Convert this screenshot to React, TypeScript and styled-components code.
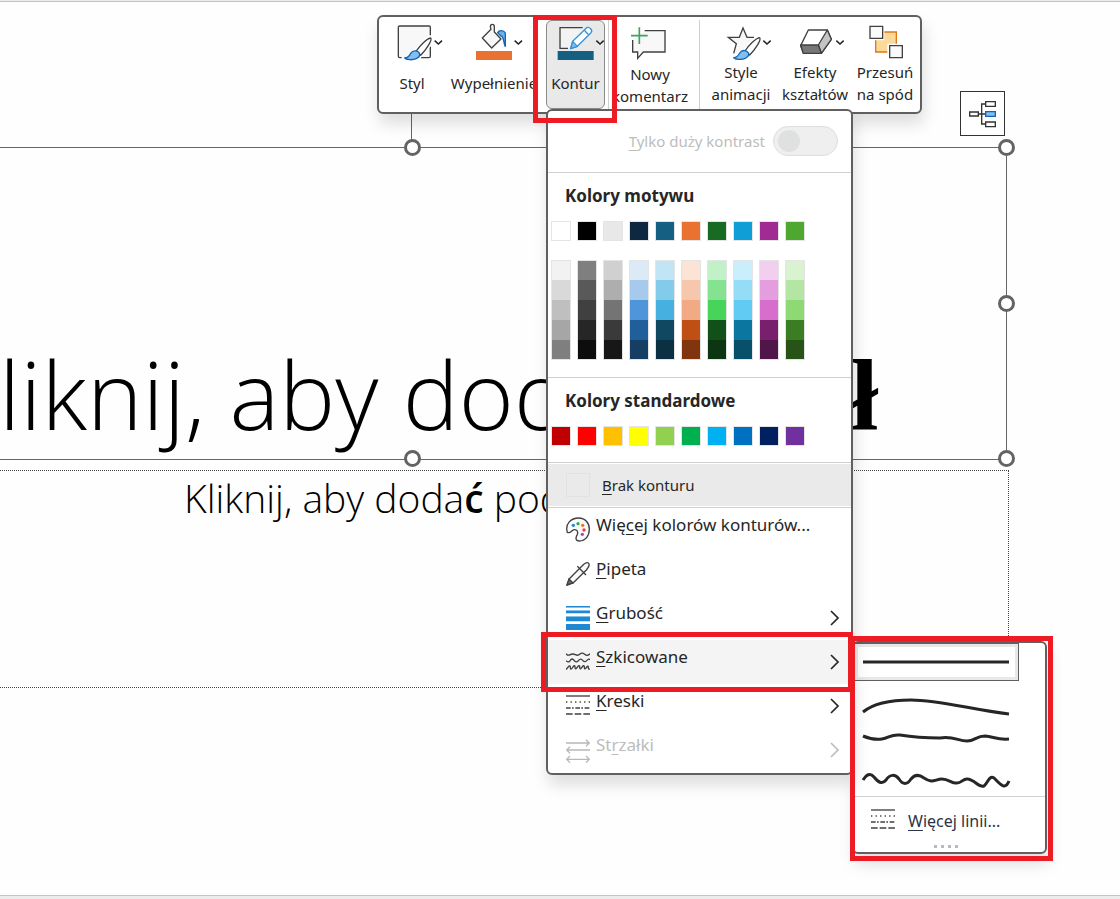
import React from "react";
import styled, { createGlobalStyle, css } from "styled-components";

const UI_FONT = '"Noto Sans", "Open Sans", sans-serif';
const INK = "#262626";
const FRAME = "#606060";
const RULE = "#d0d0d0";
const RED = "#ed1c24";

const GlobalStyle = createGlobalStyle`
  *, *::before, *::after { box-sizing: border-box; }
  body { margin: 0; background: #fdfdfd; color: ${INK}; font-family: ${UI_FONT}; }
  button { font: inherit; color: inherit; }
`;

/* ---------- slide canvas ---------- */

const Page = styled.main`
  min-height: 100vh;
  display: flex;
  flex-direction: column;
  border-top: 1px solid #ececec;
  overflow: hidden;
`;

const Canvas = styled.section`
  position: relative;
  flex: 1;
  min-height: 880px;
  padding-top: 145px;
  border-top: 1px solid #c4c4c4;
  border-bottom: 1px solid #c4c4c4;
  background: #fefefe;
`;

const BottomStrip = styled.div`
  height: 3px;
  background: #ececec;
`;

const TitleBox = styled.div`
  position: relative;
  width: 1191px;
  height: 313px;
  margin-left: -184px;
  padding-bottom: 12px;
  border: 1px solid #666;
  display: flex;
  align-items: flex-end;
  justify-content: center;
`;

const Title = styled.h1`
  margin: 0;
  font: 300 94px/104px "Open Sans", "Noto Sans", sans-serif;
  color: #000;
  white-space: nowrap;
`;

const SerifGlyph = styled.span`
  font-family: "Liberation Serif", serif;
  font-weight: 700;
  font-size: 102px;
  line-height: 1;
`;

const SubtitleBox = styled.div`
  width: 1195px;
  height: 218px;
  margin: 10px 0 0 -186px;
  border: 1px dotted #444;
  text-align: center;
`;

const Subtitle = styled.p`
  margin: 0;
  font: 300 39px/54px "Open Sans", "Noto Sans", sans-serif;
  color: #000;
`;

const AccentGlyph = styled.span`
  font-weight: 600;
`;

const Handle = styled.span<{ $x: string; $y: string }>`
  position: absolute;
  left: ${(p) => p.$x};
  top: ${(p) => p.$y};
  width: 17px;
  height: 17px;
  margin: -9px 0 0 -8px;
  border: 3px solid #636363;
  border-radius: 50%;
  background: #fff;
`;

const RotateStem = styled.span`
  position: absolute;
  left: 594px;
  bottom: 100%;
  width: 1px;
  height: 40px;
  background: #666;
`;

const DesignerButton = styled.button`
  position: absolute;
  left: 960px;
  top: 89px;
  width: 45px;
  height: 45px;
  padding: 0;
  border: 1px solid #333;
  background: #fff;
  display: flex;
  align-items: center;
  justify-content: center;
`;

/* ---------- floating toolbar ---------- */

const floating = css`
  position: absolute;
  border: 2px solid ${FRAME};
  border-radius: 6px;
  background: #fff;
  box-shadow: 2px 10px 16px rgba(0, 0, 0, 0.13);
`;

const Toolbar = styled.div`
  ${floating}
  left: 377px;
  top: 13px;
  width: 545px;
  padding: 3px 0;
  display: flex;
`;

const Tool = styled.button<{ $width: number; $gap?: number; $active?: boolean; $left?: number }>`
  flex: none;
  width: ${(p) => p.$width}px;
  height: 89px;
  margin: 0 0 0 ${(p) => p.$left ?? 0}px;
  padding: 1px 0 0;
  border: 1px solid ${(p) => (p.$active ? "#8a8a8a" : "transparent")};
  border-radius: 6px;
  background: ${(p) => (p.$active ? "#e9e9e9" : "transparent")};
  display: flex;
  flex-direction: column;
  align-items: center;
  gap: ${(p) => p.$gap ?? 0}px;
  font-size: 15px;
  line-height: 22px;
  svg { flex: none; }
`;

const ToolLabel = styled.span`
  white-space: pre;
  text-align: center;
`;

const Separator = styled.span<{ $left: number }>`
  width: 1px;
  margin-left: ${(p) => p.$left}px;
  background: #cfcfcf;
`;

/* ---------- outline menu ---------- */

const Menu = styled.div`
  ${floating}
  left: 546px;
  top: 107px;
  width: 307px;
`;

const ContrastRow = styled.label`
  height: 62px;
  padding: 0 13px 2px 0;
  border-bottom: 1px solid ${RULE};
  display: flex;
  align-items: center;
  justify-content: flex-end;
  gap: 8px;
  color: #bdbdbd;
  font-size: 15px;
`;

const Toggle = styled.input`
  appearance: none;
  width: 65px;
  height: 30px;
  margin: 0;
  padding: 3px 4px;
  border: 1px solid #dedede;
  border-radius: 15px;
  background: #efefef;
  &::before {
    content: "";
    display: block;
    width: 22px;
    height: 22px;
    border-radius: 50%;
    background: #dfe1e0;
  }
`;

const ColorSection = styled.section<{ $bottom: number }>`
  padding: 10px 3px ${(p) => p.$bottom}px;
  border-bottom: 1px solid ${RULE};
`;

const SectionTitle = styled.h2`
  margin: 0 0 12px 14px;
  font-size: 17px;
  line-height: 26px;
  font-weight: 700;
`;

const SwatchRow = styled.div`
  display: flex;
  gap: 6px;
`;

const Swatch = styled.button<{ $color: string }>`
  width: 20px;
  height: 20px;
  padding: 0;
  border: 1px solid #e4e4e4;
  background: ${(p) => p.$color};
`;

const ShadeGrid = styled.div`
  display: flex;
  gap: 6px;
  margin-top: 19px;
`;

const ShadeColumn = styled.div`
  width: 20px;
  border: 1px solid #e4e4e4;
  display: flex;
  flex-direction: column;
`;

const Shade = styled.button<{ $color: string }>`
  height: 20px;
  padding: 0;
  border: 0;
  background: ${(p) => p.$color};
  &:first-child, &:last-child { height: 19px; }
`;

const NoOutline = styled.button`
  width: 100%;
  height: 44px;
  padding: 0 0 0 18px;
  border: 1px solid #fff;
  border-width: 1px 0;
  background: #eaeaea;
  display: flex;
  align-items: center;
  gap: 12px;
  font-size: 15px;
`;

const EmptySwatch = styled.span`
  width: 24px;
  height: 24px;
  border: 1px solid #e2e2e2;
`;

const Items = styled.div`
  padding-bottom: 1px;
  border-top: 1px solid ${RULE};
`;

const Item = styled.button<{ $hover?: boolean }>`
  width: 100%;
  height: 44px;
  padding: 0 11px 0 18px;
  border: 0;
  background: ${(p) => (p.$hover ? "#f4f4f4" : "transparent")};
  display: flex;
  align-items: center;
  gap: 6px;
  font-size: 17px;
  line-height: 24px;
  text-align: left;
  &:disabled { color: #bdbdbd; }
`;

const ItemLabel = styled.span`
  flex: 1;
  padding-bottom: 10px;
`;

const Key = styled.span`
  text-decoration: underline;
  text-decoration-thickness: 1px;
  text-underline-offset: 3px;
`;

/* ---------- sketched submenu ---------- */

const SubMenu = styled.div`
  ${floating}
  left: 852px;
  top: 639px;
  width: 195px;
`;

const Sketches = styled.div`
  padding-bottom: 1px;
`;

const SketchChoice = styled.button<{ $selected?: boolean }>`
  display: block;
  width: 165px;
  height: 38px;
  padding: 0;
  border: 1px solid ${(p) => (p.$selected ? FRAME : "transparent")};
  box-shadow: ${(p) => (p.$selected ? "inset 0 0 0 3px #e8e8e8" : "none")};
  background: transparent;
  svg { display: block; margin: -1px; }
`;

const MoreLines = styled.button`
  width: 100%;
  height: 46px;
  padding: 0 0 0 17px;
  border: 0;
  border-top: 1px solid ${RULE};
  background: transparent;
  display: flex;
  align-items: center;
  gap: 13px;
  font-size: 16px;
  color: #2b3348;
`;

const MoreLabel = styled.span`
  padding-top: 3px;
`;

const Grip = styled.div`
  height: 10px;
  padding: 3px 8px 0 0;
  display: flex;
  justify-content: center;
  gap: 4px;
`;

const GripDot = styled.span`
  width: 3px;
  height: 3px;
  background: #b4bac8;
`;

const Marker = styled.div<{ $x: number; $y: number; $w: number; $h: number }>`
  position: absolute;
  left: ${(p) => p.$x}px;
  top: ${(p) => p.$y}px;
  width: ${(p) => p.$w}px;
  height: ${(p) => p.$h}px;
  border: 5px solid ${RED};
  pointer-events: none;
`;

/* ---------- icons ---------- */

const ToolIcon = ({ x, children }: { x: number; children: React.ReactNode }) => (
  <svg width="64" height="39" viewBox={`${x} 66 192 117`} fill="none" stroke="#404040" strokeWidth="4" aria-hidden="true">
    {children}
  </svg>
);

const Chevron = ({ x }: { x: number }) => (
  <path d={`M${x - 11} 122L${x} 132L${x + 11} 122`} stroke="#222" strokeWidth="4.5" />
);

const Brush = ({ x, y }: { x: number; y: number }) => (
  <g transform={`translate(${x} ${y})`} strokeLinejoin="round">
    <path d="M36 40C48 22 68 2 80 0C86 6 66 36 50 52Z" fill="#fff" stroke="#fff" strokeWidth="12" />
    <path d="M36 40C48 22 68 2 80 0C86 6 66 36 50 52Z" fill="#fff" />
    <path d="M2 60C12 60 16 54 20 46C28 34 44 38 47 48C48 62 28 66 18 65C10 65 4 62 2 60Z" fill="#83beec" stroke="#0f66b8" />
  </g>
);

const StyleIcon = () => (
  <ToolIcon x={30}>
    <path d="M181 106V82Q181 78 177 78H89Q85 78 85 82V169Q85 173 89 173H181V82" fill="#f8f8f8" stroke="none" />
    <path d="M181 106V82Q181 78 177 78H89Q85 78 85 82V169Q85 173 89 173H95M153 173H177Q181 173 181 169V140" />
    <Brush x={102} y={114} />
    <Chevron x={205} />
  </ToolIcon>
);

const FillIcon = () => (
  <ToolIcon x={279}>
    <path d="M340 114L366 88L364 80Q364 73 370 73Q376 73 376 80V96L396 117L368 144Z" fill="#f8f8f8" strokeLinejoin="round" />
    <path d="M386 98C390 90 404 90 409 99V140C403 128 405 108 396 108Z" fill="#6fb2e8" stroke="#0f66b8" />
    <path d="M321 153H429V180H321Z" fill="#e97132" stroke="none" />
    <Chevron x={448} />
  </ToolIcon>
);

const OutlineIcon = () => (
  <ToolIcon x={520}>
    <path d="M568 83H640L605 145H568Z" fill="#f3f3f3" stroke="none" />
    <path d="M636 83H568V145H592" />
    <path d="M600 146L606 124L648 83Q654 80 660 86Q666 92 661 98L620 139Z" fill="#fff" stroke="#2f94dc" strokeLinejoin="round" />
    <path d="M600 146L606 124L620 139Z" fill="#83beec" stroke="#2f94dc" strokeLinejoin="round" />
    <path d="M641 91L654 104" stroke="#2f94dc" />
    <path d="M561 153H669V180H561Z" fill="#156082" stroke="none" />
    <Chevron x={688} />
  </ToolIcon>
);

const CommentIcon = () => (
  <ToolIcon x={54}>
    <path d="M134 92H195V156H130L113 175V156H98V120" fill="#f8f8f8" />
    <path d="M118 82V132M93 107H143" stroke="#3aa657" strokeWidth="5" />
  </ToolIcon>
);

const AnimationIcon = () => (
  <ToolIcon x={327}>
    <path d="M403 161L409 131L385 112H418L429 84L441 112H472L440 145Z" fill="#f8f8f8" stroke="none" />
    <path d="M401 160L409 131L385 112H418L429 84L441 112H462" />
    <Brush x={399} y={113} />
    <Chevron x={501} />
  </ToolIcon>
);

const EffectsIcon = () => (
  <ToolIcon x={549}>
    <path d="M625 90H682L694 118L664 160H610L602 137Z" fill="#fff" strokeLinejoin="round" />
    <path d="M682 90L694 118L664 160L655 135Z" fill="#c4c4c4" strokeLinejoin="round" />
    <path d="M602 135H655L664 160H610Z" fill="#777" strokeLinejoin="round" />
    <Chevron x={720} />
  </ToolIcon>
);

const SendBackIcon = () => (
  <ToolIcon x={759}>
    <path d="M827 96H889V156H827Z" fill="#fbd998" stroke="#dd7a14" />
    <path d="M805 73H853V121H805ZM862 131H912V179H862Z" fill="#fff" stroke="none" />
    <path d="M810 79H848V115H810ZM869 137H907V173H869Z" fill="#fafafa" />
  </ToolIcon>
);

const HierarchyIcon = () => (
  <svg width="27" height="28" viewBox="0 0 81 84" fill="#fff" stroke="#333" strokeWidth="4" aria-hidden="true">
    <path d="M28 42H48M48 12H38V72H48" fill="none" />
    <path d="M2 36H28V48H2ZM50 5H79V19H50ZM50 66H79V80H50Z" />
    <path d="M50 35H79V49H50Z" fill="#83beec" stroke="#0f66b8" />
  </svg>
);

const MenuIcon = ({ children }: { children: React.ReactNode }) => (
  <svg width="24" height="26" viewBox="0 0 72 78" fill="none" stroke="#404040" strokeWidth="4" aria-hidden="true">
    {children}
  </svg>
);

const PaletteIcon = () => (
  <MenuIcon>
    <path d="M4 46C-4 20 16 3 38 3C58 3 70 18 70 37C70 57 58 72 40 72C28 72 28 62 34 52C38 42 28 34 20 40C14 45 10 50 4 46Z" fill="#fafafa" />
    <g stroke="none">
      <circle cx="22" cy="25" r="5" fill="#1e88d2" />
      <circle cx="36" cy="20" r="5" fill="#3aa657" />
      <circle cx="50" cy="25" r="5" fill="#e07a14" />
      <circle cx="54" cy="39" r="5" fill="#ee3b3b" />
      <circle cx="49" cy="52" r="5" fill="#a347ba" />
    </g>
  </MenuIcon>
);

const DropperIcon = () => (
  <MenuIcon>
    <path d="M3 72L10 53L48 15Q60 2 67 6Q74 12 61 27L22 65Z" fill="#fafafa" strokeLinejoin="round" />
    <path d="M34 16L60 42" />
    <path d="M3 72L9 54L21 66Z" fill="#707070" />
  </MenuIcon>
);

const WeightIcon = () => (
  <MenuIcon>
    <g fill="#1e88d2" stroke="none">
      <path d="M0 3H72V7H0ZM0 17H72V25H0ZM0 35H72V49H0ZM0 57H72V75H0Z" />
      <path d="M0 7H72V9H0ZM0 15H72V17H0ZM0 33H72V35H0Z" opacity=".5" />
    </g>
  </MenuIcon>
);

const SketchIcon = () => (
  <MenuIcon>
    <path d="M0 14Q6 21 13 17T28 17T42 15T56 16T72 14" />
    <path d="M0 35Q8 43 13 34T26 36Q32 42 38 34T51 35Q57 41 63 34T72 33" />
    <path d="M0 62L9 51Q13 49 13 55Q13 64 18 58L24 50Q28 49 27 56Q28 63 32 57L38 50Q42 49 41 56Q42 63 46 57L52 50Q55 49 55 55Q55 63 60 57L64 52Q67 50 67 55Q67 62 72 60" />
  </MenuIcon>
);

const DashIcon = () => (
  <MenuIcon>
    <path d="M0 9H72" />
    <path d="M0 27H72" strokeDasharray="4 9.6" />
    <path d="M0 45H72" strokeDasharray="14 4 5 5" />
    <path d="M0 63H72" strokeDasharray="20 6" />
  </MenuIcon>
);

const ArrowsIcon = () => (
  <MenuIcon>
    <g stroke="#b8b8b8">
      <path d="M0 18H70M60 8L70 18L60 28M72 39H2M12 29L2 39L12 49M2 67H70M12 57L2 67L12 77M60 57L70 67L60 77" />
    </g>
  </MenuIcon>
);

const Caret = () => (
  <svg width="11" height="16" viewBox="0 0 11 16" fill="none" stroke="currentColor" strokeWidth="1.7" aria-hidden="true">
    <path d="M2 1L9 8L2 15" />
  </svg>
);

/* ---------- data ---------- */

const themeColors = ["#ffffff", "#000000", "#e8e8e8", "#0e2841", "#156082", "#e97132", "#196b24", "#0f9ed5", "#a02b93", "#4ea72e"];

const shades = [
  ["#f2f2f2", "#d9d9d9", "#bfbfbf", "#a6a6a6", "#7f7f7f"],
  ["#7f7f7f", "#595959", "#404040", "#262626", "#0d0d0d"],
  ["#d0d0d0", "#aeaeae", "#747474", "#3a3a3a", "#171717"],
  ["#dceaf7", "#a6caec", "#4e95d9", "#215f9a", "#163e64"],
  ["#c1e5f5", "#83cbeb", "#46b1e1", "#104862", "#0b3041"],
  ["#fbe3d6", "#f6c6ad", "#f2aa84", "#c04f15", "#80350e"],
  ["#c2f1c8", "#84e291", "#47d45a", "#12501a", "#0c3512"],
  ["#caeefb", "#95dcf7", "#61cbf4", "#0b769f", "#084f6a"],
  ["#f2cfee", "#e59edd", "#d86ecc", "#78206e", "#501549"],
  ["#d9f2d0", "#b4e5a2", "#8ed973", "#3b7d23", "#275317"],
];

const standardColors = ["#c00000", "#ff0000", "#ffc000", "#ffff00", "#92d050", "#00b050", "#00b0f0", "#0070c0", "#002060", "#7030a0"];

const sketches = [
  { name: "Linia prosta", d: "M9 19H155" },
  { name: "Krzywa", d: "M9 31C20 22 36 19 57 19C86 19 119 29 155 33" },
  { name: "Od ręki", d: "M9 17C16 20 22 21 28 20C35 19 37 15 46 16C58 18 70 19 86 19C100 17 104 22 113 22C121 22 122 17 131 17C140 18 144 21 155 20" },
  {
    name: "Bazgroły",
    d: "M9 23C12 18 16 15 20 20C24 25 28 28 32 23C36 17 41 17 45 22C49 28 53 28 57 22C61 17 66 18 70 21C79 27 81 22 88 22C95 22 98 27 103 26C108 26 109 21 114 22C121 23 125 31 130 29C134 26 135 18 140 21C146 27 151 34 155 24",
  },
];

const menuItems = [
  { before: "Wię", key: "c", after: "ej kolorów konturów...", icon: <PaletteIcon /> },
  { before: "", key: "P", after: "ipeta", icon: <DropperIcon /> },
  { before: "", key: "G", after: "rubość", icon: <WeightIcon />, sub: true },
  { before: "", key: "S", after: "zkicowane", icon: <SketchIcon />, sub: true, hover: true },
  { before: "", key: "K", after: "reski", icon: <DashIcon />, sub: true },
  { before: "St", key: "r", after: "załki", icon: <ArrowsIcon />, sub: true, disabled: true },
];

export default function App() {
  return (
    <Page>
      <GlobalStyle />
      <Canvas>
        <TitleBox>
          <Title>
            Kliknij, aby dodać tytu<SerifGlyph>ł</SerifGlyph>
          </Title>
          <RotateStem />
          <Handle $x="50%" $y="0" />
          <Handle $x="100%" $y="0" />
          <Handle $x="100%" $y="50%" />
          <Handle $x="50%" $y="100%" />
          <Handle $x="100%" $y="100%" />
        </TitleBox>
        <SubtitleBox>
          <Subtitle>
            Kliknij, aby doda<AccentGlyph>ć</AccentGlyph> podtytuł
          </Subtitle>
        </SubtitleBox>

        <DesignerButton aria-label="Projektant">
          <HierarchyIcon />
        </DesignerButton>

        <Toolbar role="toolbar">
          <Tool $width={66} $gap={11}><StyleIcon /><ToolLabel>Styl</ToolLabel></Tool>
          <Tool $width={94} $gap={11} $left={2}><FillIcon /><ToolLabel>Wypełnienie</ToolLabel></Tool>
          <Tool $width={59} $gap={11} $left={5} $active><OutlineIcon /><ToolLabel>Kontur</ToolLabel></Tool>
          <Separator $left={3} />
          <Tool $width={82} $gap={2}><CommentIcon /><ToolLabel>{"Nowy\nkomentarz"}</ToolLabel></Tool>
          <Separator $left={8} />
          <Tool $width={74} $left={4}><AnimationIcon /><ToolLabel>{"Style\nanimacji"}</ToolLabel></Tool>
          <Tool $width={74}><EffectsIcon /><ToolLabel>{"Efekty\nkształtów"}</ToolLabel></Tool>
          <Tool $width={66}><SendBackIcon /><ToolLabel>{"Przesuń\nna spód"}</ToolLabel></Tool>
        </Toolbar>

        <SubMenu>
          <Sketches>
            {sketches.map((s, i) => (
              <SketchChoice key={s.name} aria-label={s.name} $selected={i === 0}>
                <svg width="165" height="38" fill="none" stroke="#262626" strokeWidth="3">
                  <path d={s.d} />
                </svg>
              </SketchChoice>
            ))}
          </Sketches>
          <MoreLines>
            <DashIcon />
            <MoreLabel><Key>W</Key>ięcej linii...</MoreLabel>
          </MoreLines>
          <Grip>
            <GripDot /><GripDot /><GripDot /><GripDot />
          </Grip>
        </SubMenu>

        <Menu>
          <ContrastRow>
            <span><Key>T</Key>ylko duży kontrast</span>
            <Toggle type="checkbox" role="switch" disabled />
          </ContrastRow>
          <ColorSection $bottom={17}>
            <SectionTitle>Kolory motywu</SectionTitle>
            <SwatchRow>
              {themeColors.map((c) => <Swatch key={c} $color={c} aria-label={c} />)}
            </SwatchRow>
            <ShadeGrid>
              {shades.map((column, i) => (
                <ShadeColumn key={i}>
                  {column.map((c) => <Shade key={c} $color={c} aria-label={c} />)}
                </ShadeColumn>
              ))}
            </ShadeGrid>
          </ColorSection>
          <ColorSection $bottom={16}>
            <SectionTitle>Kolory standardowe</SectionTitle>
            <SwatchRow>
              {standardColors.map((c) => <Swatch key={c} $color={c} aria-label={c} />)}
            </SwatchRow>
          </ColorSection>
          <NoOutline>
            <EmptySwatch />
            <span><Key>B</Key>rak konturu</span>
          </NoOutline>
          <Items>
            {menuItems.map((m) => (
              <Item key={m.after} $hover={m.hover} disabled={m.disabled}>
                {m.icon}
                <ItemLabel>{m.before}<Key>{m.key}</Key>{m.after}</ItemLabel>
                {m.sub && <Caret />}
              </Item>
            ))}
          </Items>
        </Menu>

        <Marker $x={533} $y={13} $w={84} $h={108} />
        <Marker $x={541} $y={630} $w={312} $h={60} />
        <Marker $x={850} $y={634} $w={203} $h={225} />
      </Canvas>
      <BottomStrip />
    </Page>
  );
}
